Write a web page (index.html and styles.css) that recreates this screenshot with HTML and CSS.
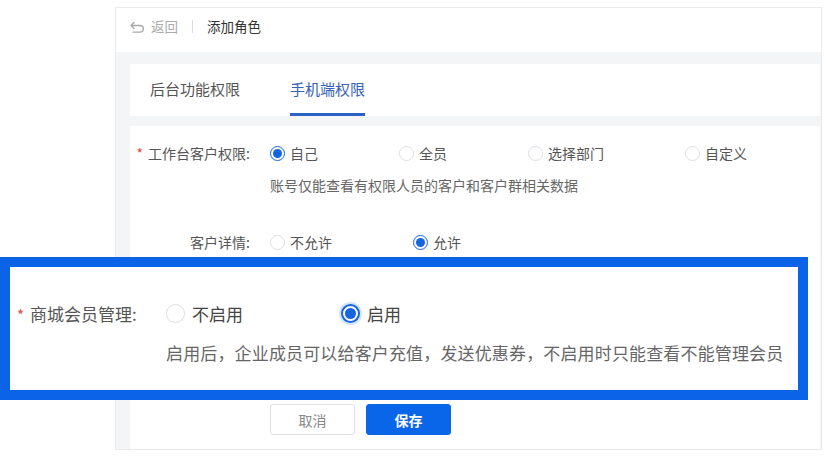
FILE: index.html
```html
<!DOCTYPE html>
<html lang="zh-CN">
<head>
<meta charset="utf-8">
<title>添加角色</title>
<link rel="stylesheet" href="styles.css">
</head>
<body>
<div class="panel">
  <div class="header">
    <span class="back">
      <svg class="back-icon" width="15" height="12" viewBox="0 0 15 12"><path d="M4 1.5 L1 4.5 L4 7.5 M1.2 4.5 H10 a3.3 3.3 0 0 1 0 6.6 H3" fill="none" stroke="#a9a9a9" stroke-width="1.4" stroke-linecap="round" stroke-linejoin="round"/></svg>
      返回
    </span>
    <span class="divider"></span>
    <span class="title">添加角色</span>
  </div>
  <div class="tabs">
    <div class="tab">后台功能权限</div>
    <div class="tab active">手机端权限</div>
  </div>
  <div class="form">
    <div class="row">
      <div class="label"><span class="star">*</span>工作台客户权限:</div>
      <div class="options">
        <span class="opt"><span class="radio on"></span>自己</span>
        <span class="opt"><span class="radio"></span>全员</span>
        <span class="opt"><span class="radio"></span>选择部门</span>
        <span class="opt"><span class="radio"></span>自定义</span>
      </div>
    </div>
    <div class="desc">账号仅能查看有权限人员的客户和客户群相关数据</div>
    <div class="row row2">
      <div class="label">客户详情:</div>
      <div class="options">
        <span class="opt"><span class="radio"></span>不允许</span>
        <span class="opt"><span class="radio on"></span>允许</span>
      </div>
    </div>
    <div class="actions">
      <button class="btn cancel">取消</button>
      <button class="btn save">保存</button>
    </div>
  </div>
</div>

<div class="highlight">
  <div class="hl-row">
    <div class="hl-label"><span class="star">*</span>商城会员管理:</div>
    <span class="hl-opt first"><span class="radio big"></span>不启用</span>
    <span class="hl-opt"><span class="radio big on"></span>启用</span>
  </div>
  <div class="hl-desc">启用后，企业成员可以给客户充值，发送优惠券，不启用时只能查看不能管理会员</div>
</div>
</body>
</html>
```

FILE: styles.css
```css
* { box-sizing: border-box; }
html, body {
  margin: 0;
  padding: 0;
  background: #ffffff;
  font-family: "Noto Sans CJK SC", "Noto Sans", sans-serif;
  color: #555;
}
body { width: 832px; height: 457px; overflow: hidden; position: relative; }

.panel {
  margin: 7px 0 0 115px;
  width: 707px;
  height: 443px;
  border: 1px solid #e9eaec;
  background: #f4f5f7;
  display: flex;
  flex-direction: column;
}

.header {
  height: 44px;
  background: #fff;
  display: flex;
  align-items: center;
  padding: 0 0 8px 14px;
  font-size: 13.5px;
}
.back { display: flex; align-items: center; color: #aaa; gap: 6px; }
.back-icon { display: block; margin-top: 1px; }
.divider { width: 1px; height: 13px; background: #dcdcdc; margin: 0 14px 0 14px; }
.title { color: #333; }

.tabs {
  margin: 12px 1px 0 14px;
  height: 52px;
  background: #fff;
  display: flex;
  padding-left: 20px;
  gap: 50px;
}
.tab {
  font-size: 15px;
  line-height: 50px;
  color: #555;
  border-bottom: 2px solid transparent;
  height: 52px;
}
.tab.active { color: #3660b4; border-bottom: 3px solid #2b62c6; }

.form {
  margin: 10px 1px 0 14px;
  flex: 1;
  background: #fff;
  padding-top: 16px;
  font-size: 14px;
}
.row { display: flex; align-items: center; height: 22px; }
.row2 { margin-top: 35px; }
.label {
  flex: none;
  min-width: 0;
  width: 120px;
  display: flex;
  justify-content: flex-end;
  margin-right: 20px;
  color: #555;
  white-space: nowrap;
}
.star { color: #e5473b; margin-right: 5px; }
.options { display: flex; }
.opt {
  display: flex;
  align-items: center;
  margin-right: 81px;
  color: #555;
  white-space: nowrap;
}
.radio {
  width: 15px;
  height: 15px;
  border-radius: 50%;
  border: 1px solid #dcdfe4;
  background: #fff;
  margin-right: 5px;
  position: relative;
  flex: none;
}
.radio.on { border: 1.5px solid #1565e0; }
.radio.on::after {
  content: "";
  position: absolute;
  left: 50%;
  top: 50%;
  width: 9px;
  height: 9px;
  margin: -4.5px 0 0 -4.5px;
  border-radius: 50%;
  background: #1565e0;
}
.desc { margin: 10px 0 0 140px; line-height: 22px; color: #666; }

.actions { display: flex; gap: 11px; margin: 151px 0 0 140px; }
.btn {
  width: 85px;
  height: 31px;
  border-radius: 3px;
  font-family: inherit;
  font-size: 14px;
  cursor: pointer;
}
.cancel { background: #fff; border: 1px solid #dcdfe4; color: #888; }
.save { background: #0a66e8; border: 1px solid #0a66e8; color: #fff; font-weight: bold; }

.highlight {
  position: absolute;
  left: 0;
  top: 257px;
  width: 808px;
  height: 143px;
  border: 10px solid #0b63e7;
  background: #fff;
  padding: 35px 0 0 7px;
  font-size: 17px;
  color: #555;
}
.hl-row { display: flex; align-items: center; height: 22px; }
.hl-label { width: 135px; white-space: nowrap; color: #555; }
.hl-label .star { margin-right: 6px; font-size: 15px; }
.hl-opt { display: flex; align-items: center; white-space: nowrap; color: #444; }
.hl-opt.first { width: 175px; margin-left: 14px; }
.radio.big { width: 19px; height: 19px; margin-right: 7px; }
.radio.big.on { border: 2px solid #1565e0; box-shadow: 0 0 0 2px #d6e4fb; }
.radio.big.on::after { width: 11px; height: 11px; margin: -5.5px 0 0 -5.5px; }
.hl-desc { margin: 18px 0 0 149px; line-height: 22px; color: #666; white-space: nowrap; letter-spacing: 0.15px; }
```
